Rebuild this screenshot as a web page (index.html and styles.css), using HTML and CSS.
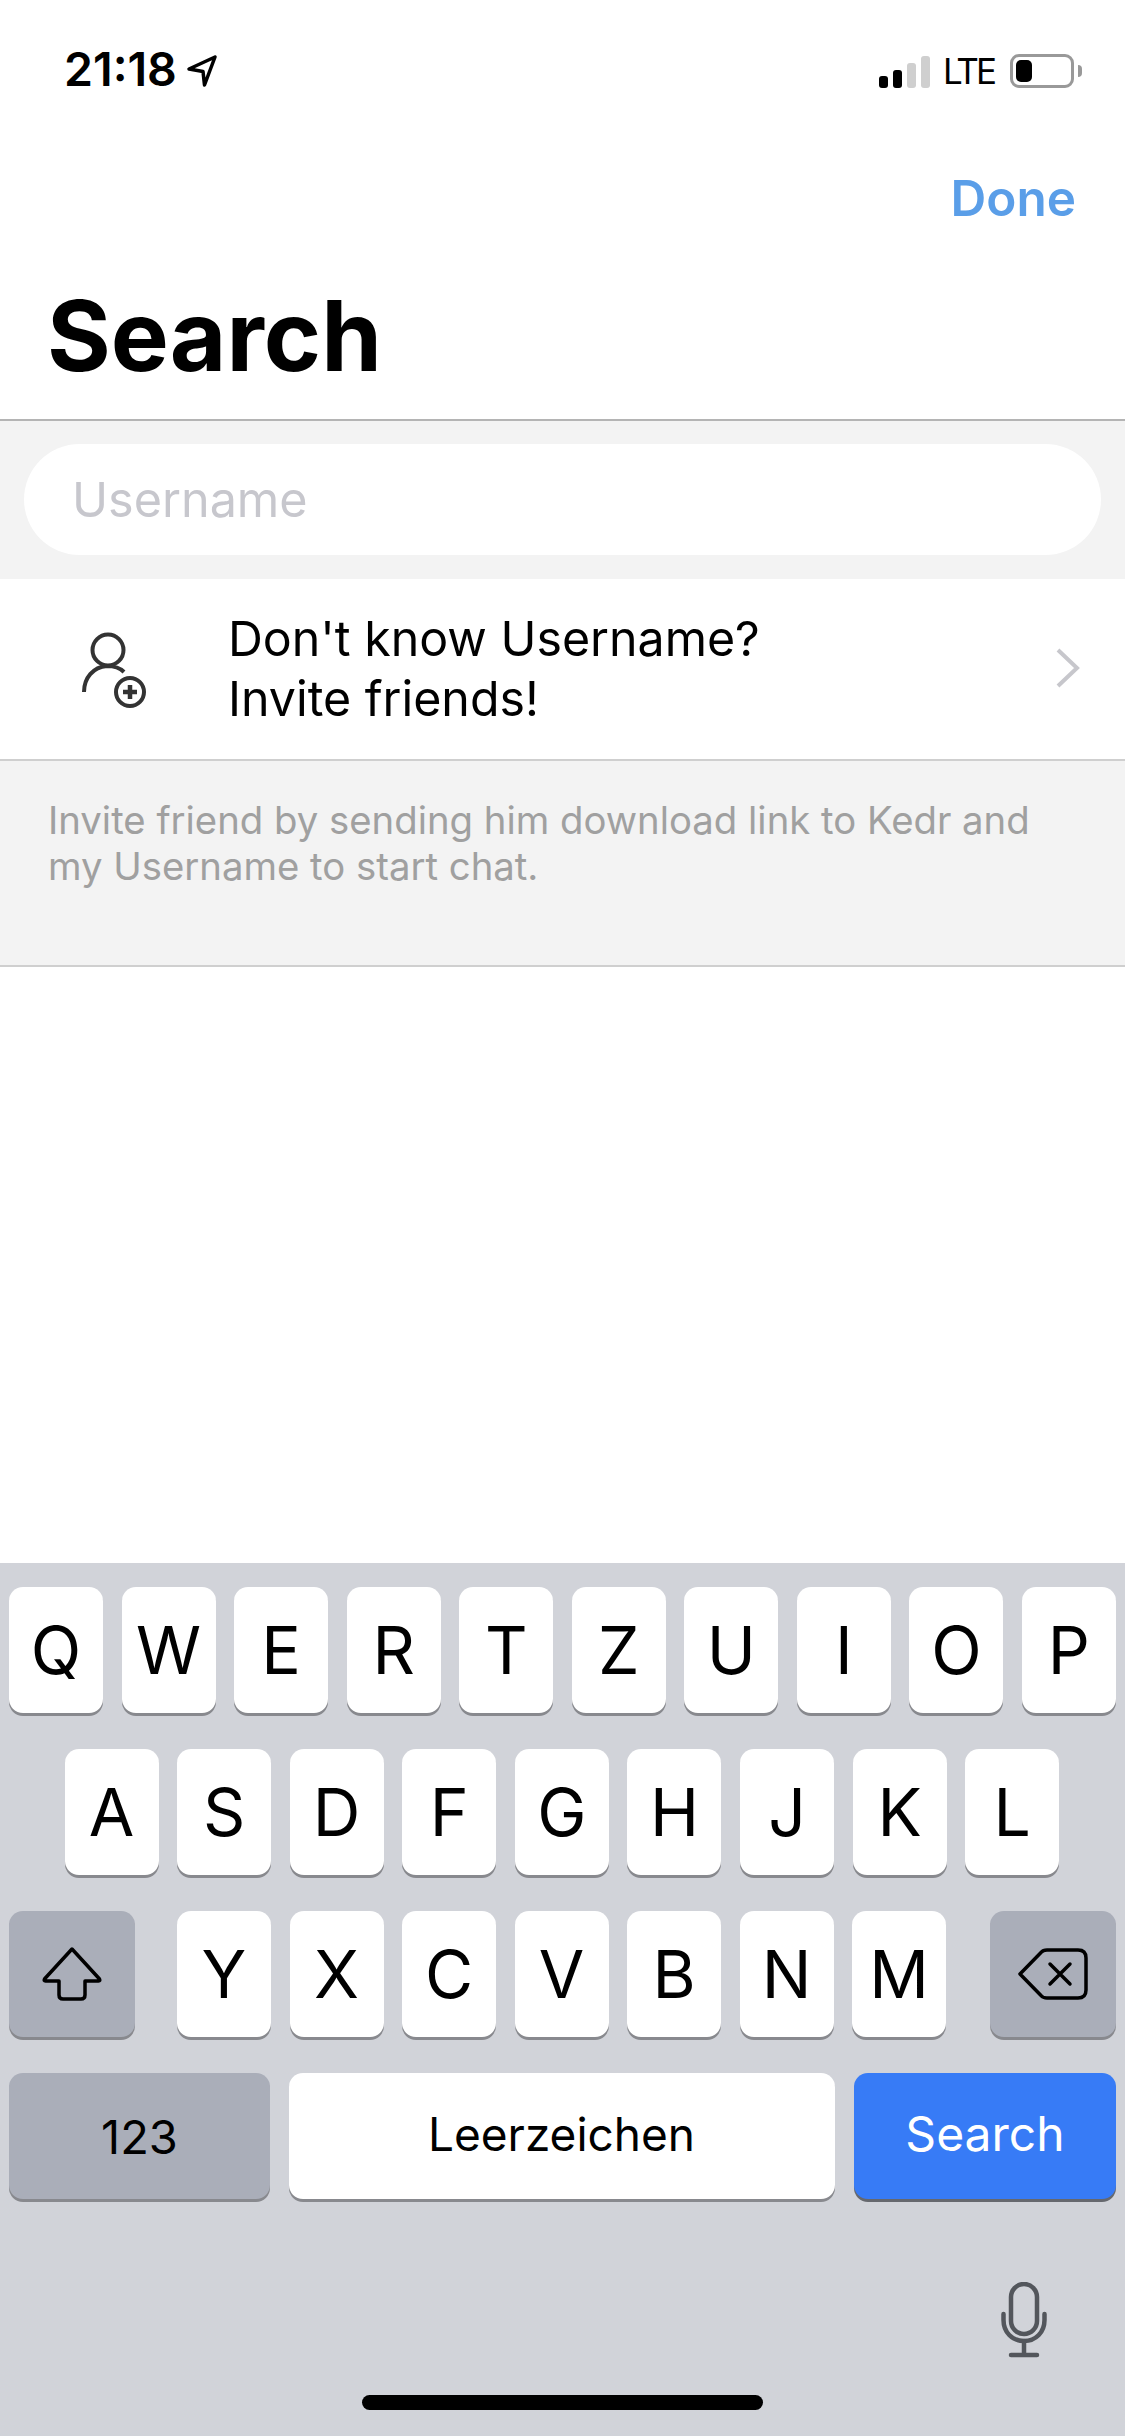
FILE: index.html
```html
<!DOCTYPE html>
<html lang="en">
<head>
    <meta charset="UTF-8">
    <meta name="viewport" content="width=device-width, initial-scale=1.0">
    <title>Search</title>
    <link rel="stylesheet" href="styles.css">
</head>
<body>
    <div class="screen">
        <div class="status-bar">
            <div class="status-left">
                <span class="time">21:18</span>
                <svg class="location" width="32" height="34" viewBox="0 0 32 34">
                    <path d="M29 3 L3 15 L17 17.5 L18.500 31 Z" fill="none" stroke="#000" stroke-width="3.500" stroke-linejoin="round"/>
                </svg>
            </div>
            <div class="status-right">
                <div class="signal">
                    <span class="bar bar-1"></span>
                    <span class="bar bar-2"></span>
                    <span class="bar bar-3 off"></span>
                    <span class="bar bar-4 off"></span>
                </div>
                <span class="network">LTE</span>
                <div class="battery"><span class="battery-level"></span></div>
                <span class="battery-nub"></span>
            </div>
        </div>

        <div class="nav-action">Done</div>
        <h1 class="page-title">Search</h1>

        <div class="search-section">
            <div class="search-field">Username</div>
        </div>

        <div class="invite-row">
            <svg class="invite-icon" width="70" height="80" viewBox="0 0 70 80">
                <circle cx="27" cy="19" r="15.500" fill="none" stroke="#333" stroke-width="4"/>
                <path d="M3 61 C3 47 12 36 26 35 C33 35 38 36 43 41" fill="none" stroke="#333" stroke-width="4"/>
                <circle cx="49" cy="61" r="14" fill="none" stroke="#333" stroke-width="4"/>
                <path d="M49 54 V68 M42 61 H56" fill="none" stroke="#333" stroke-width="4.500"/>
            </svg>
            <div class="invite-text">Don't know Username?<br>Invite friends!</div>
            <svg class="chevron" width="26" height="40" viewBox="0 0 26 40">
                <path d="M3 2 L22 20 L3 38" fill="none" stroke="#c7c7cc" stroke-width="4"/>
            </svg>
        </div>

        <div class="invite-note">Invite friend by sending him download link to Kedr and<br>my Username to start chat.</div>

        <div class="keyboard">
            <div class="key-row">
                <div class="key">Q</div>
                <div class="key">W</div>
                <div class="key">E</div>
                <div class="key">R</div>
                <div class="key">T</div>
                <div class="key">Z</div>
                <div class="key">U</div>
                <div class="key">I</div>
                <div class="key">O</div>
                <div class="key">P</div>
            </div>
            <div class="key-row key-row-middle">
                <div class="key">A</div>
                <div class="key">S</div>
                <div class="key">D</div>
                <div class="key">F</div>
                <div class="key">G</div>
                <div class="key">H</div>
                <div class="key">J</div>
                <div class="key">K</div>
                <div class="key">L</div>
            </div>
            <div class="key-row">
                <div class="key key-dark key-side">
                    <svg width="62" height="56" viewBox="0 0 62 56">
                        <path d="M31 3 L58.500 33 Q59.500 35 57.500 35 H44 V49 Q44 53 40 53 H22 Q18 53 18 49 V35 H4.500 Q2.500 35 3.500 33 Z" fill="none" stroke="#000" stroke-width="3.500" stroke-linejoin="round"/>
                    </svg>
                </div>
                <div class="letter-group">
                    <div class="key">Y</div>
                    <div class="key">X</div>
                    <div class="key">C</div>
                    <div class="key">V</div>
                    <div class="key">B</div>
                    <div class="key">N</div>
                    <div class="key">M</div>
                </div>
                <div class="key key-dark key-side">
                    <svg width="70" height="52" viewBox="0 0 70 52">
                        <path d="M2 26 L23 4.500 Q25 2 29 2 H60 Q68 2 68 10 V42 Q68 50 60 50 H29 Q25 50 23 47.500 Z" fill="none" stroke="#000" stroke-width="3.500" stroke-linejoin="round"/>
                        <path d="M32 16 L52 36 M52 16 L32 36" fill="none" stroke="#000" stroke-width="3.500" stroke-linecap="round"/>
                    </svg>
                </div>
            </div>
            <div class="key-row">
                <div class="key key-dark key-numbers">123</div>
                <div class="key key-space">Leerzeichen</div>
                <div class="key key-go">Search</div>
            </div>
            <div class="mic-row">
                <svg width="46" height="76" viewBox="0 0 46 76">
                    <rect x="10" y="2" width="26" height="50" rx="13" fill="none" stroke="#53565c" stroke-width="4.500"/>
                    <path d="M2.500 32 V38 C2.500 50 11 59 23 59 C35 59 43.500 50 43.500 38 V32" fill="none" stroke="#53565c" stroke-width="4.500" stroke-linecap="round"/>
                    <path d="M23 59 V73 M10 73 H36" fill="none" stroke="#53565c" stroke-width="4.500" stroke-linecap="round"/>
                </svg>
            </div>
            <div class="home-indicator"></div>
        </div>
    </div>
</body>
</html>
```

FILE: styles.css
```css
* {
    box-sizing: border-box;
}

body {
    margin: 0;
    font-family: Inter, "Liberation Sans", sans-serif;
    color: #000;
    background-color: #fff;
}

.screen {
    width: 1125px;
    height: 2436px;
    display: flex;
    flex-direction: column;
    overflow: hidden;
}

/* status bar */
.status-bar {
    height: 168px;
    padding: 48px 43px 0 64px;
    display: flex;
    justify-content: space-between;
    align-items: flex-start;
}

.status-left {
    display: flex;
    align-items: center;
    gap: 9px;
}

.time {
    font-size: 46.500px;
    font-weight: 600;
    line-height: 42px;
}

.location {
    margin-top: 3px;
}

.status-right {
    display: flex;
    align-items: center;
    height: 42px;
}

.signal {
    display: flex;
    align-items: flex-end;
    gap: 5px;
    height: 32px;
    margin-top: 6px;
}

.bar {
    width: 9px;
    border-radius: 3px;
    background-color: #000;
}

.bar-1 {
    height: 12px;
}

.bar-2 {
    height: 18px;
}

.bar-3 {
    height: 25px;
}

.bar-4 {
    height: 32px;
}

.bar.off {
    background-color: #cfcfcf;
}

.network {
    font-size: 35px;
    line-height: 42px;
    letter-spacing: -3px;
    margin-left: 13px;
    margin-top: 3px;
}

.battery {
    width: 64px;
    height: 34px;
    margin-left: 16px;
    padding: 3px;
    border: 3px solid #999;
    border-radius: 9px;
    margin-top: 3px;
}

.battery-level {
    display: block;
    width: 16px;
    height: 22px;
    border-radius: 5px;
    background-color: #000;
}

.battery-nub {
    width: 4px;
    height: 12px;
    margin-left: 4px;
    margin-top: 3px;
    border-radius: 0 6px 6px 0;
    background-color: #999;
}

/* header */
.nav-action {
    align-self: flex-end;
    padding-right: 49px;
    font-size: 49.500px;
    font-weight: 600;
    line-height: 60px;
    color: #5a9ee8;
}

.page-title {
    margin: 48px 0 0;
    padding: 0 0 23px 47px;
    font-size: 97.500px;
    font-weight: 700;
    line-height: 120px;
    border-bottom: 2px solid #b4b4b4;
}

/* search */
.search-section {
    padding: 23px 24px 24px;
    background-color: #f3f3f3;
}

.search-field {
    height: 111px;
    padding-left: 48px;
    display: flex;
    align-items: center;
    border-radius: 56px;
    background-color: #fff;
    font-size: 48.500px;
    color: #c7c7cd;
}

.invite-row {
    height: 182px;
    padding: 0 44px 0 81px;
    display: flex;
    align-items: center;
    border-bottom: 2px solid #cfcfcf;
}

.invite-icon {
    flex: none;
    margin-top: 4px;
}

.invite-text {
    flex: 1;
    margin-left: 77px;
    font-size: 48.300px;
    line-height: 60px;
}

.chevron {
    flex: none;
    margin-bottom: 2px;
}

.invite-note {
    height: 206px;
    padding: 36px 0 0 48px;
    background-color: #f3f3f3;
    border-bottom: 2px solid #cfcfcf;
    font-size: 38.300px;
    line-height: 46px;
    color: #a0a0a0;
}

/* keyboard */
.keyboard {
    margin-top: auto;
    height: 873px;
    padding-top: 24px;
    display: flex;
    flex-direction: column;
    gap: 36px;
    background-color: #d1d3d9;
}

.key-row {
    height: 126px;
    padding: 0 9px;
    display: flex;
    justify-content: space-between;
}

.key-row-middle {
    justify-content: flex-start;
    padding-left: 64.500px;
    gap: 18.600px;
}

.key {
    width: 94px;
    height: 126px;
    display: flex;
    align-items: center;
    justify-content: center;
    border-radius: 14px;
    background-color: #fff;
    box-shadow: 0 3px 0 #88898e;
    font-size: 66px;
}

.letter-group {
    display: flex;
    gap: 18.500px;
    margin-right: 2px;
}

.key-dark {
    background-color: #aaaeb9;
}

.key-side {
    width: 126px;
}

.key-numbers {
    width: 261px;
    font-size: 47px;
}

.key-space {
    width: 546px;
    margin-right: 1px;
    padding-bottom: 5px;
    font-size: 46px;
}

.key-go {
    width: 262px;
    padding-bottom: 5px;
    background-color: #377bf6;
    box-shadow: 0 3px 0 #66686e;
    font-size: 48px;
    color: #fff;
}

.mic-row {
    margin-top: 47px;
    padding-right: 78px;
    display: flex;
    justify-content: flex-end;
}

.home-indicator {
    width: 401px;
    height: 15px;
    margin: 1px auto 0;
    border-radius: 8px;
    background-color: #000;
}
```
